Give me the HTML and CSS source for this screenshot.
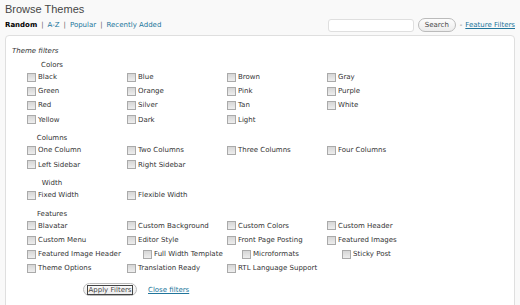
FILE: index.html
```html
<!DOCTYPE html>
<html lang="en">
<head>
    <meta charset="UTF-8">
    <title>Browse Themes</title>
    <link rel="stylesheet" href="styles.css">
</head>
<body>
    <div class="wrap">
        <h2 class="page-title">Browse Themes</h2>

        <div class="toolbar">
            <div class="tabs">
                <span class="tab current">Random</span><span class="sep">|</span><a class="tab" href="#">A-Z</a><span class="sep">|</span><a class="tab" href="#">Popular</a><span class="sep">|</span><a class="tab" href="#">Recently Added</a>
            </div>
            <div class="search">
                <input type="text" class="search-input">
                <button class="pill-button search-button">Search</button>
                <span class="dash">-</span>
                <a href="#" class="feature-link">Feature Filters</a>
            </div>
        </div>

        <div class="filter-box">
            <div class="box-title">Theme filters</div>

            <div class="group">
                <div class="group-name">Colors</div>
                <div class="row">
                    <label class="item"><span class="check"></span>Black</label>
                    <label class="item"><span class="check"></span>Blue</label>
                    <label class="item"><span class="check"></span>Brown</label>
                    <label class="item"><span class="check"></span>Gray</label>
                </div>
                <div class="row">
                    <label class="item"><span class="check"></span>Green</label>
                    <label class="item"><span class="check"></span>Orange</label>
                    <label class="item"><span class="check"></span>Pink</label>
                    <label class="item"><span class="check"></span>Purple</label>
                </div>
                <div class="row">
                    <label class="item"><span class="check"></span>Red</label>
                    <label class="item"><span class="check"></span>Silver</label>
                    <label class="item"><span class="check"></span>Tan</label>
                    <label class="item"><span class="check"></span>White</label>
                </div>
                <div class="row">
                    <label class="item"><span class="check"></span>Yellow</label>
                    <label class="item"><span class="check"></span>Dark</label>
                    <label class="item"><span class="check"></span>Light</label>
                </div>
            </div>

            <div class="group">
                <div class="group-name">Columns</div>
                <div class="row">
                    <label class="item"><span class="check"></span>One Column</label>
                    <label class="item"><span class="check"></span>Two Columns</label>
                    <label class="item"><span class="check"></span>Three Columns</label>
                    <label class="item"><span class="check"></span>Four Columns</label>
                </div>
                <div class="row">
                    <label class="item"><span class="check"></span>Left Sidebar</label>
                    <label class="item"><span class="check"></span>Right Sidebar</label>
                </div>
            </div>

            <div class="group">
                <div class="group-name">Width</div>
                <div class="row">
                    <label class="item"><span class="check"></span>Fixed Width</label>
                    <label class="item"><span class="check"></span>Flexible Width</label>
                </div>
            </div>

            <div class="group">
                <div class="group-name">Features</div>
                <div class="row">
                    <label class="item"><span class="check"></span>Blavatar</label>
                    <label class="item"><span class="check"></span>Custom Background</label>
                    <label class="item"><span class="check"></span>Custom Colors</label>
                    <label class="item"><span class="check"></span>Custom Header</label>
                </div>
                <div class="row">
                    <label class="item"><span class="check"></span>Custom Menu</label>
                    <label class="item"><span class="check"></span>Editor Style</label>
                    <label class="item"><span class="check"></span>Front Page Posting</label>
                    <label class="item"><span class="check"></span>Featured Images</label>
                </div>
                <div class="row">
                    <label class="item item-long"><span class="check"></span>Featured Image Header</label>
                    <label class="item item-mid"><span class="check"></span>Full Width Template</label>
                    <label class="item"><span class="check"></span>Microformats</label>
                    <label class="item"><span class="check"></span>Sticky Post</label>
                </div>
                <div class="row">
                    <label class="item"><span class="check"></span>Theme Options</label>
                    <label class="item"><span class="check"></span>Translation Ready</label>
                    <label class="item"><span class="check"></span>RTL Language Support</label>
                </div>
            </div>

            <div class="actions">
                <button class="pill-button apply-button"><span class="focus-ring">Apply Filters</span></button>
                <a href="#" class="close-link">Close filters</a>
            </div>
        </div>
    </div>
</body>
</html>
```

FILE: styles.css
```css
body {
    margin: 0;
    background-color: #f9f9f9;
    font-family: "DejaVu Sans", Verdana, sans-serif;
    font-size: 7px;
    color: #333;
}

a {
    color: #21759b;
    text-decoration: none;
}

.wrap {
    padding: 3px 5px 0;
}

.page-title {
    margin: 0;
    font-family: "Liberation Sans", Arial, sans-serif;
    font-size: 11px;
    font-weight: normal;
    line-height: 13px;
    color: #464646;
}

.toolbar {
    display: flex;
    justify-content: space-between;
    align-items: center;
    height: 16px;
    margin-top: 1px;
}

.tabs {
    display: flex;
    align-items: center;
}

.tab.current {
    font-weight: bold;
    color: #000;
}

.sep {
    color: #666;
    padding: 0 4px;
}

.search {
    display: flex;
    align-items: center;
}

.search-input {
    box-sizing: border-box;
    width: 86px;
    height: 13px;
    margin: 0;
    padding: 0 2px;
    border: 1px solid #dfdfdf;
    border-radius: 3px;
    background-color: #fff;
}

.pill-button {
    box-sizing: border-box;
    margin: 0;
    padding: 0;
    border: 1px solid #bbb;
    border-radius: 10px;
    background: linear-gradient(#fdfdfd, #ececec);
    font-family: "DejaVu Sans", Verdana, sans-serif;
    font-size: 7px;
    color: #464646;
    display: flex;
    align-items: center;
    justify-content: center;
}

.search-button {
    width: 38px;
    height: 14px;
    margin-left: 4px;
}

.dash {
    color: #666;
    margin: 0 3px 0 4px;
}

.feature-link {
    text-decoration: underline;
}

.filter-box {
    margin-top: 2px;
    height: 300px;
    padding: 10px 6px 0;
    border: 1px solid #dfdfdf;
    border-radius: 4px;
    background-color: #fff;
}

.box-title {
    font-style: italic;
    line-height: 10px;
}

.group {
    margin-top: 6.5px;
}

.box-title + .group {
    margin-top: 4px;
}

.group-name {
    width: 60px;
    margin-left: 10px;
    text-align: center;
    line-height: 10px;
}

.row {
    display: flex;
    height: 14.2px;
    align-items: center;
    padding-left: 15px;
}

.item {
    display: flex;
    align-items: center;
    flex: none;
    width: 100px;
    white-space: nowrap;
}

.item-long {
    width: 116px;
}

.item-mid {
    width: 99px;
}

.check {
    box-sizing: border-box;
    width: 9px;
    height: 9px;
    margin-right: 2px;
    border: 1px solid #aaa;
    background: linear-gradient(#d6d6d6, #eeeeee);
}

.actions {
    display: flex;
    align-items: center;
    margin-top: 7.5px;
    padding-left: 71px;
}

.apply-button {
    width: 54px;
    height: 13px;
}

.focus-ring {
    border: 1px solid #444;
    padding: 0 1px;
    line-height: 8px;
}

.close-link {
    margin-left: 11px;
    text-decoration: underline;
}
```
